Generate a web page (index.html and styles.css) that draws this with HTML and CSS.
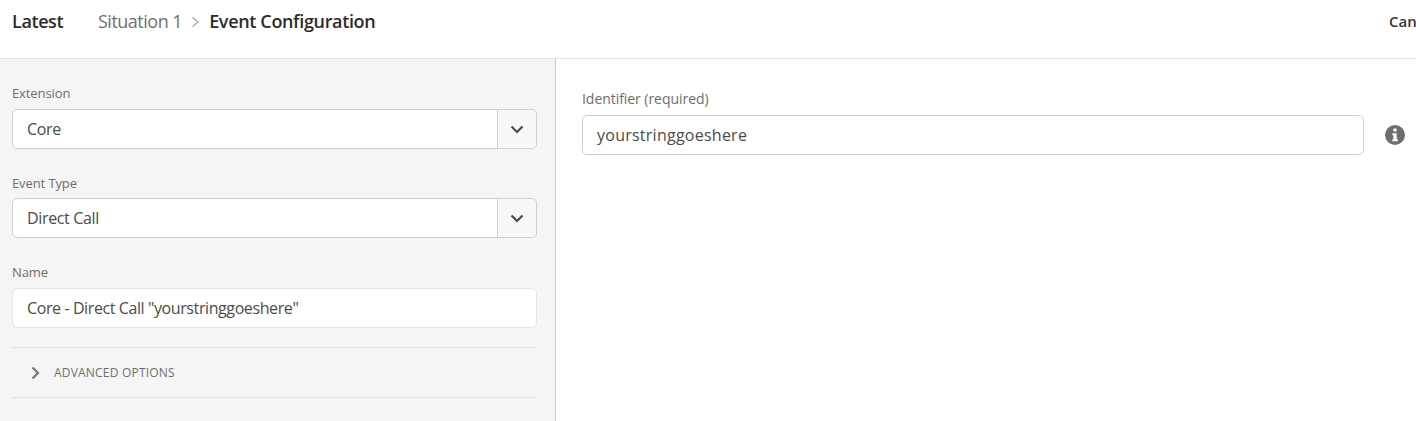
FILE: index.html
```html
<!DOCTYPE html>
<html lang="en">
<head>
  <meta charset="UTF-8" />
  <meta name="viewport" content="width=device-width, initial-scale=1.0"/>
  <title>Event Configuration</title>
  <link rel="stylesheet" href="styles.css">
</head>
<body>

  <div class="page">
    <header class="topbar">
      <div class="title">Latest</div>
      <div class="crumbs">
        <span class="crumb">Situation 1</span>
        <svg class="crumb-sep" width="9" height="12" viewBox="0 0 9 12"><path d="M1.500 1.500 7 6l-5.500 4.500" fill="none" stroke="#a8a8a8" stroke-width="1.300"/></svg>
        <span class="crumb-current">Event Configuration</span>
      </div>
      <div class="cancel">Cancel</div>
    </header>

    <main class="columns">
      <section class="side">
        <div class="label label-first">Extension</div>
        <div class="select">
          <div class="select-value">Core</div>
          <div class="select-btn">
            <svg width="14" height="9" viewBox="0 0 14 9"><path d="M1.500 1.500 7 7l5.500-5.500" fill="none" stroke="#4b4b4b" stroke-width="2.200"/></svg>
          </div>
        </div>

        <div class="label label-type">Event Type</div>
        <div class="select">
          <div class="select-value">Direct Call</div>
          <div class="select-btn">
            <svg width="14" height="9" viewBox="0 0 14 9"><path d="M1.500 1.500 7 7l5.500-5.500" fill="none" stroke="#4b4b4b" stroke-width="2.200"/></svg>
          </div>
        </div>

        <div class="label label-name">Name</div>
        <div class="field field-name">Core - Direct Call "yourstringgoeshere"</div>

        <div class="advanced">
          <svg width="9" height="14" viewBox="0 0 9 14"><path d="M1.500 1.500 7 7l-5.500 5.500" fill="none" stroke="#767676" stroke-width="2.200"/></svg>
          <span>ADVANCED OPTIONS</span>
        </div>
      </section>

      <section class="content">
        <div class="label label-id">Identifier (required)</div>
        <div class="field-row">
          <div class="field field-id">yourstringgoeshere</div>
          <svg class="info" width="20" height="20" viewBox="0 0 20 20">
            <circle cx="10" cy="10" r="10" fill="#6e6e6e"/>
            <rect x="8.300" y="3.600" width="3.400" height="3" rx="1" fill="#fff"/>
            <path d="M7.400 8.300h4.300v6h1v1.900H7.400v-1.900h1v-4.100h-1z" fill="#fff"/>
          </svg>
        </div>
      </section>
    </main>
  </div>

</body>
</html>
```

FILE: styles.css
```css
html, body {
  margin: 0;
  overflow: hidden;
}

body {
  font-family: 'Open Sans', sans-serif;
  background-color: #fff;
  color: #4b4b4b;
}

.page {
  width: 1437px;
  height: 421px;
  display: flex;
  flex-direction: column;
}

.topbar {
  border-bottom: 1px solid #e4e4e4;
  display: flex;
  align-items: center;
  padding: 0 0 16px 12px;
  height: 42px;
  font-size: 18px;
  font-weight: 600;
  letter-spacing: -0.4px;
  color: #2c2c2c;
}

.title {
  width: 86px;
}

.crumbs {
  display: flex;
  align-items: center;
  flex: 1;
}

.crumb {
  font-weight: 400;
  letter-spacing: -0.5px;
  color: #707070;
}

.crumb-sep {
  margin: 1px 9px 0 9px;
}

.crumb-current {
  letter-spacing: -0.35px;
}

.cancel {
  font-size: 15px;
  letter-spacing: 0;
  font-weight: 600;
  color: #323232;
}

.columns {
  flex: 1;
  display: flex;
}

.side {
  width: 525px;
  padding: 0 18px 0 12px;
  background-color: #f5f5f5;
  border-right: 1px solid #c8c8c8;
}

.content {
  padding: 31px 0 0 26px;
}

.label {
  font-size: 13px;
  line-height: 18px;
  letter-spacing: -0.1px;
  color: #6e6e6e;
  margin-bottom: 7px;
}

.label-first {
  margin-top: 25px;
}

.label-type {
  margin-top: 25px;
  margin-bottom: 6px;
}

.label-name {
  margin-top: 25px;
}

.label-id {
  font-size: 14px;
  letter-spacing: -0.05px;
}

.select, .field {
  box-sizing: border-box;
  height: 40px;
  background: #fff;
  border: 1px solid #cfcfcf;
  border-radius: 5px;
  font-size: 16px;
  letter-spacing: -0.35px;
  color: #4b4b4b;
}

.select {
  display: flex;
}

.select-value {
  flex: 1;
  padding-left: 14px;
  line-height: 38px;
}

.select-btn {
  width: 38px;
  border-left: 1px solid #cfcfcf;
  background: #f8f8f8;
  border-radius: 0 5px 5px 0;
  display: flex;
  align-items: center;
  justify-content: center;
}

.field {
  padding-left: 14px;
  line-height: 38px;
}

.field-name {
  border-color: #e6e6e6;
  letter-spacing: -0.4px;
}

.advanced {
  margin-top: 19px;
  height: 49px;
  border-top: 1px solid #e1e1e1;
  border-bottom: 1px solid #e1e1e1;
  padding-left: 19px;
  display: flex;
  align-items: center;
  gap: 14px;
  font-size: 12px;
  letter-spacing: 0.2px;
  color: #6e6e6e;
}

.field-row {
  display: flex;
  align-items: center;
}

.field-id {
  width: 782px;
  letter-spacing: 0.25px;
}

.info {
  margin-left: 21px;
}
```
